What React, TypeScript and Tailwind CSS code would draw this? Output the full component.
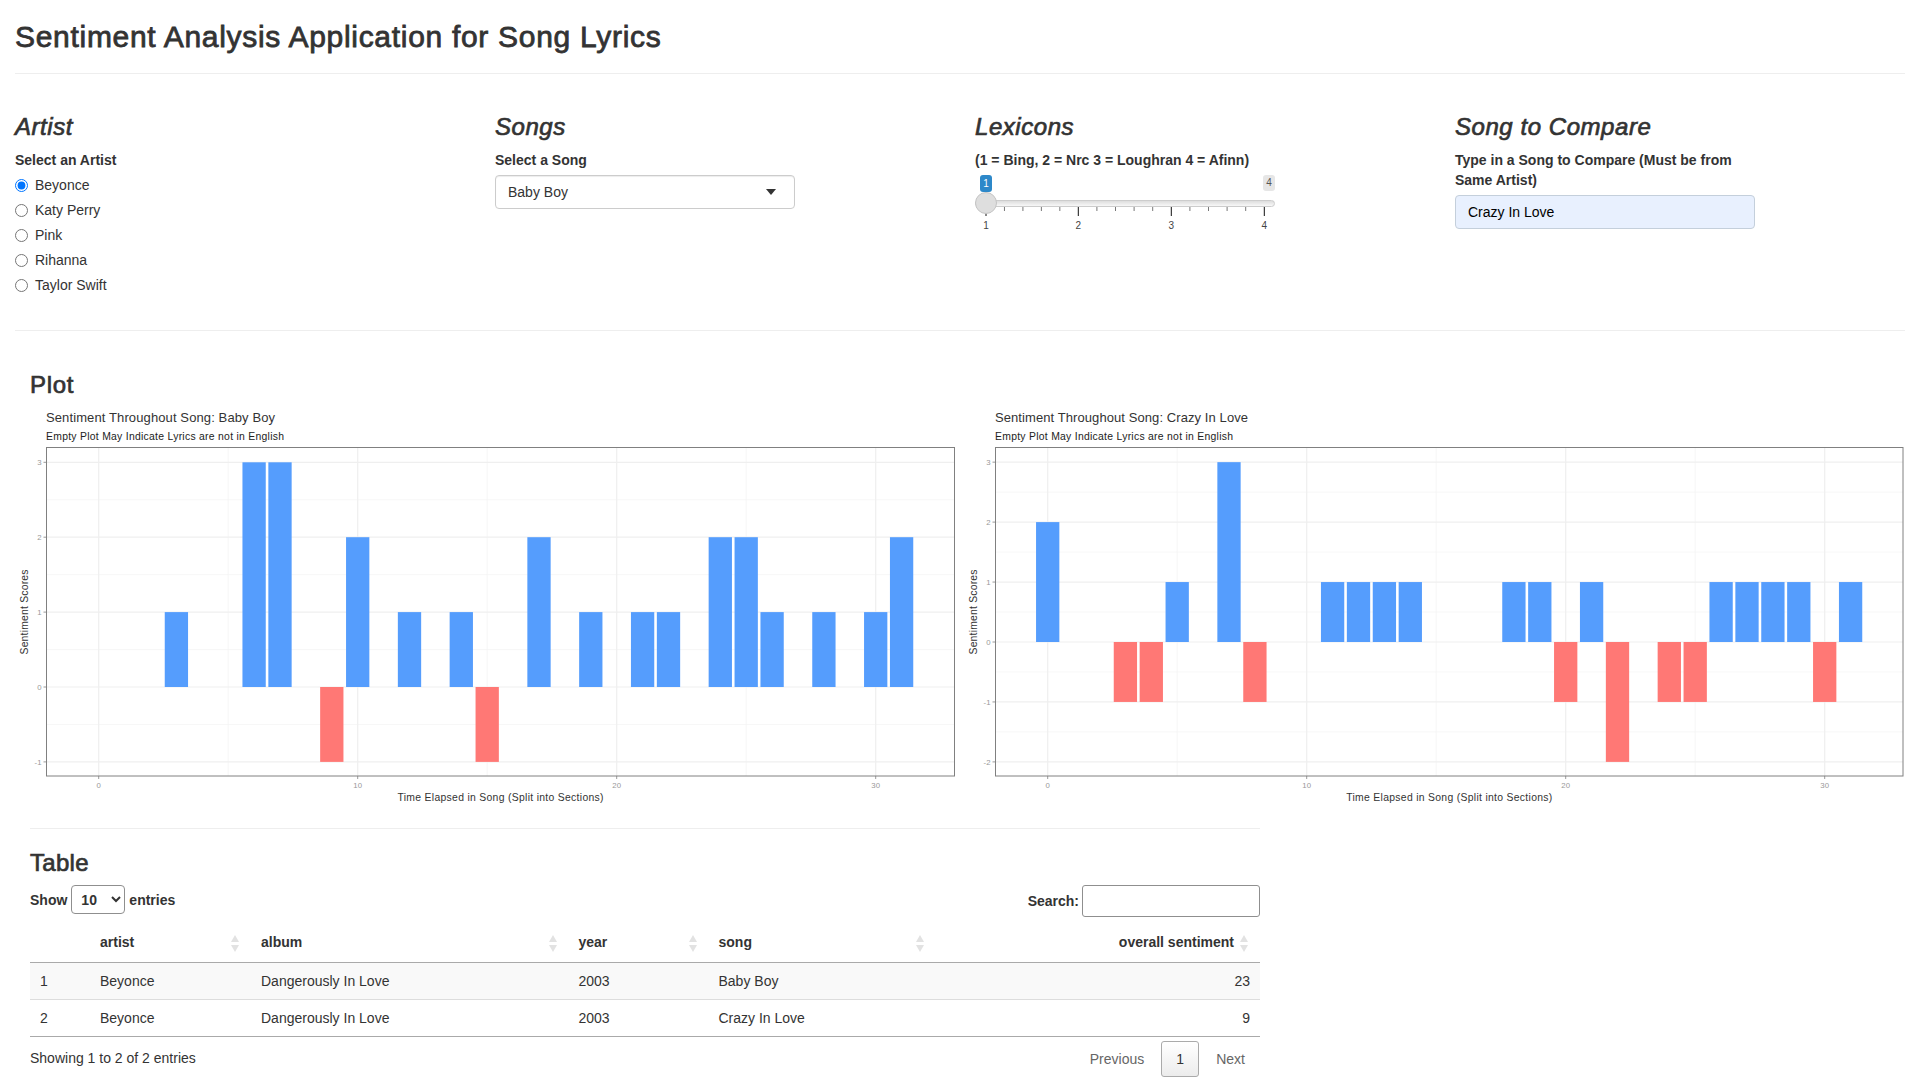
import React from "react";

type Bar = [number, number];

const FONT = "font-['Liberation_Sans',Arial,sans-serif]";

function Plot({
  width,
  panelLeft,
  panelRight,
  x0,
  y0,
  unit,
  yTicks,
  bars,
  title,
  titleLen,
}: {
  width: number;
  panelLeft: number;
  panelRight: number;
  x0: number;
  y0: number;
  unit: number;
  yTicks: number[];
  bars: Bar[];
  title: string;
  titleLen: number;
}) {
  const sx = 25.9;
  const top = 47.5;
  const bottom = 376;
  const px = (v: number) => x0 + v * sx;
  const py = (v: number) => y0 - v * unit;
  const minor: number[] = [];
  for (let i = 0; i < yTicks.length - 1; i++) minor.push((yTicks[i] + yTicks[i + 1]) / 2);
  const mid = (panelLeft + panelRight) / 2;
  const ff = "'Liberation Sans', Arial, sans-serif";
  return (
    <svg width={width} height={428} className="block shrink-0" fontFamily={ff}>
      <text x={panelLeft - 0.5} y={22} fontSize={13} fill="#333" textLength={titleLen}>
        {title}
      </text>
      <text x={panelLeft - 0.5} y={40} fontSize={10.4} fill="#222" textLength={238}>
        Empty Plot May Indicate Lyrics are not in English
      </text>
      {minor.map((v) => (
        <line key={"m" + v} x1={panelLeft} x2={panelRight} y1={py(v)} y2={py(v)} stroke="#f5f5f5" strokeWidth={0.8} />
      ))}
      {[5, 15, 25].map((v) => (
        <line key={"v" + v} x1={px(v)} x2={px(v)} y1={top} y2={bottom} stroke="#f5f5f5" strokeWidth={0.8} />
      ))}
      {yTicks.map((v) => (
        <line key={"M" + v} x1={panelLeft} x2={panelRight} y1={py(v)} y2={py(v)} stroke="#efefef" strokeWidth={1.2} />
      ))}
      {[0, 10, 20, 30].map((v) => (
        <line key={"V" + v} x1={px(v)} x2={px(v)} y1={top} y2={bottom} stroke="#efefef" strokeWidth={1.2} />
      ))}
      {bars.map(([x, v]) => (
        <rect
          key={x}
          x={px(x) - 11.65}
          width={23.3}
          y={v > 0 ? py(v) : y0}
          height={Math.abs(v) * unit}
          fill={v > 0 ? "#559dfd" : "#ff7875"}
        />
      ))}
      <rect x={panelLeft} y={top} width={panelRight - panelLeft} height={bottom - top} fill="none" stroke="#808080" strokeWidth={1} />
      {yTicks.map((v) => (
        <g key={"t" + v}>
          <line x1={panelLeft - 3} x2={panelLeft} y1={py(v)} y2={py(v)} stroke="#808080" strokeWidth={0.8} />
          <text x={panelLeft - 5} y={py(v) + 2.8} fontSize={7.8} fill="#999" textAnchor="end">
            {v}
          </text>
        </g>
      ))}
      {[0, 10, 20, 30].map((v) => (
        <g key={"b" + v}>
          <line x1={px(v)} x2={px(v)} y1={bottom} y2={bottom + 3} stroke="#808080" strokeWidth={0.8} />
          <text x={px(v)} y={388} fontSize={7.8} fill="#999" textAnchor="middle">
            {v}
          </text>
        </g>
      ))}
      <text
        x={0}
        y={0}
        fontSize={10.4}
        fill="#333"
        textAnchor="middle"
        textLength={85}
        transform={`translate(${panelLeft - 18.5} 212) rotate(-90)`}
      >
        Sentiment Scores
      </text>
      <text x={mid} y={400.5} fontSize={10.4} fill="#333" textAnchor="middle" textLength={206}>
        Time Elapsed in Song (Split into Sections)
      </text>
    </svg>
  );
}

const bars1: Bar[] = [
  [3, 1], [6, 3], [7, 3], [9, -1], [10, 2], [12, 1], [14, 1], [15, -1], [17, 2],
  [19, 1], [21, 1], [22, 1], [24, 2], [25, 2], [26, 1], [28, 1], [30, 1], [31, 2],
];
const bars2: Bar[] = [
  [0, 2], [3, -1], [4, -1], [5, 1], [7, 3], [8, -1], [11, 1], [12, 1], [13, 1], [14, 1],
  [18, 1], [19, 1], [20, -1], [21, 1], [22, -2], [24, -1], [25, -1], [26, 1], [27, 1],
  [28, 1], [29, 1], [30, -1], [31, 1],
];

function Col({ title, children }: { title: string; children: React.ReactNode }) {
  return (
    <div className="px-[15px]">
      <h3 className="mt-5 mb-[10px] text-[24px] leading-[26.4px] font-normal italic tracking-[0.55px] [-webkit-text-stroke:0.7px_#333]">
        {title}
      </h3>
      {children}
    </div>
  );
}

function SortIcon() {
  return (
    <svg width="8" height="17" viewBox="0 0 8 17" className="absolute right-3 top-[13px]">
      <path d="M4 0 L8 7 L0 7 Z" fill="#e2e2e2" />
      <path d="M4 17 L8 10 L0 10 Z" fill="#e2e2e2" />
    </svg>
  );
}

function Slider() {
  const majors = [11, 103.3, 196.3, 289.3];
  const minors: number[] = [];
  for (let i = 0; i < 3; i++) {
    for (let j = 1; j < 5; j++) minors.push(majors[i] + ((majors[i + 1] - majors[i]) * j) / 5);
  }
  return (
    <div className="relative h-[62px] w-[300px]">
      <div className="absolute left-[5px] top-0 flex h-[17px] w-3 items-center justify-center rounded-[3px] bg-[#2d88c9] text-[10px] leading-none text-white">
        1
      </div>
      <div className="absolute right-0 top-0 flex h-[16px] w-3 items-center justify-center rounded-[3px] bg-[#e6e6e6] text-[10px] leading-none text-[#555]">
        4
      </div>
      <div className="absolute left-0 top-[25px] h-[7px] w-[300px] rounded-[4px] border border-[#cccccc] bg-gradient-to-b from-[#dddddd] to-[#f8f8f8]" />
      <svg width="300" height="62" className="absolute left-0 top-0" fontFamily="'Liberation Sans', Arial, sans-serif">
        {minors.map((x) => (
          <line key={x} x1={x} x2={x} y1={32} y2={36} stroke="#555" strokeWidth={0.8} />
        ))}
        {majors.map((x, i) => (
          <g key={x}>
            <line x1={x} x2={x} y1={32} y2={41} stroke="#111" strokeWidth={1} />
            <text x={x} y={54} fontSize={10} fill="#444" textAnchor="middle">
              {i + 1}
            </text>
          </g>
        ))}
      </svg>
      <div className="absolute left-0 top-[17px] h-[22px] w-[22px] rounded-full border border-[#c4c4c4] bg-[#dedede]" />
    </div>
  );
}

export default function App() {
  const rows = [
    ["1", "Beyonce", "Dangerously In Love", "2003", "Baby Boy", "23"],
    ["2", "Beyonce", "Dangerously In Love", "2003", "Crazy In Love", "9"],
  ];
  return (
    <div className={`${FONT} h-[1080px] overflow-hidden bg-white px-[15px] pt-5 text-[14px] leading-5 text-[#333]`}>
      <h1 className="mb-5 text-[30px] leading-[33px] font-normal tracking-[0.7px] [-webkit-text-stroke:0.8px_#333]">
        Sentiment Analysis Application for Song Lyrics
      </h1>
      <hr className="border-0 border-t border-[#eee]" />

      <div className="-mx-[15px] mt-[20px] grid h-[236px] grid-cols-4">
        <Col title="Artist">
          <div className="mb-[5px] font-bold">Select an Artist</div>
          <div className="flex flex-col gap-[5px]">
            {["Beyonce", "Katy Perry", "Pink", "Rihanna", "Taylor Swift"].map((a, i) => (
              <label key={a} className="flex h-5 items-center gap-[7px]">
                <input type="radio" name="artist" defaultChecked={i === 0} className="m-0 h-[13px] w-[13px]" />
                <span>{a}</span>
              </label>
            ))}
          </div>
        </Col>
        <Col title="Songs">
          <div className="mb-[5px] font-bold">Select a Song</div>
          <div className="flex h-[34px] w-[300px] items-center justify-between rounded-[4px] border border-[#ccc] pl-3 pr-[18px] shadow-[inset_0_1px_1px_rgba(0,0,0,0.075)]">
            <span>Baby Boy</span>
            <span className="h-0 w-0 border-x-[5px] border-t-[6px] border-x-transparent border-t-[#333]" />
          </div>
        </Col>
        <Col title="Lexicons">
          <div className="mb-[5px] font-bold">(1 = Bing, 2 = Nrc 3 = Loughran 4 = Afinn)</div>
          <Slider />
        </Col>
        <Col title="Song to Compare">
          <div className="mb-[5px] w-[300px] font-bold">Type in a Song to Compare (Must be from Same Artist)</div>
          <input
            type="text"
            defaultValue="Crazy In Love"
            className="block h-[34px] w-[300px] rounded-[4px] border border-[#c4cfdb] bg-[#e8f0fe] px-3 text-[14px] text-black"
          />
        </Col>
      </div>

      <hr className="border-0 border-t border-[#eee]" />

      <h3 className="mt-[41px] h-[28px] pl-[15px] text-[24px] leading-[26.4px] font-normal tracking-[0.7px] [-webkit-text-stroke:0.7px_#333]">
        Plot
      </h3>
      <div className="flex">
        <Plot
          width={948}
          panelLeft={31.5}
          panelRight={939.5}
          x0={83.7}
          y0={287}
          unit={74.9}
          yTicks={[3, 2, 1, 0, -1]}
          bars={bars1}
          title="Sentiment Throughout Song: Baby Boy"
          titleLen={229}
        />
        <Plot
          width={942}
          panelLeft={32.5}
          panelRight={940}
          x0={84.7}
          y0={242}
          unit={59.95}
          yTicks={[3, 2, 1, 0, -1, -2]}
          bars={bars2}
          title="Sentiment Throughout Song: Crazy In Love"
          titleLen={253}
        />
      </div>

      <div className="ml-[15px] w-[1230px]">
        <hr className="border-0 border-t border-[#eee]" />
        <h3 className="mt-[21px] mb-[8.6px] text-[24px] leading-[26.4px] font-normal tracking-[0.3px] [-webkit-text-stroke:0.7px_#333]">
          Table
        </h3>
        <div className="flex h-[32px] items-start justify-between font-bold">
          <div className="flex h-[29px] items-center">
            <span>Show</span>
            <select
              defaultValue="10"
              className="mx-[4px] h-[29px] w-[54px] rounded-[4px] border border-[#8f8f8f] bg-white pl-[5px] text-[14px] font-bold text-[#333]"
            >
              <option value="10">10</option>
              <option value="25">25</option>
            </select>
            <span>entries</span>
          </div>
          <div className="flex items-center gap-[3px]">
            <span>Search:</span>
            <input type="text" className="h-[32px] w-[178px] rounded-[3px] border border-[#8f8f8f] bg-white" />
          </div>
        </div>
        <table className="mt-[5px] w-[1230px] table-fixed border-collapse">
          <colgroup>
            <col className="w-[60px]" />
            <col className="w-[161px]" />
            <col className="w-[317.5px]" />
            <col className="w-[140px]" />
            <col className="w-[227.5px]" />
            <col className="w-[324px]" />
          </colgroup>
          <thead>
            <tr className="h-[40px] border-b border-[#aaa]">
              {["", "artist", "album", "year", "song", "overall sentiment"].map((h, i) => (
                <th
                  key={i}
                  className={`relative p-0 font-bold ${i === 5 ? "pr-[26px] text-right" : "pl-[10px] text-left"}`}
                >
                  {h}
                  {i > 0 && <SortIcon />}
                </th>
              ))}
            </tr>
          </thead>
          <tbody>
            {rows.map((r, ri) => (
              <tr
                key={ri}
                className={`h-[37px] border-b ${ri === 0 ? "border-[#ddd] bg-[#f9f9f9]" : "border-[#aaa] bg-white"}`}
              >
                {r.map((c, i) => (
                  <td key={i} className={`px-[10px] py-0 ${i === 5 ? "text-right" : "text-left"}`}>
                    {c}
                  </td>
                ))}
              </tr>
            ))}
          </tbody>
        </table>
        <div className="flex items-start justify-between">
          <div className="mt-[11px]">Showing 1 to 2 of 2 entries</div>
          <div className="mt-[4px] flex items-center text-[#666]">
            <span className="mr-[17px]">Previous</span>
            <span className="flex h-[36px] w-[38px] items-center justify-center rounded-[3px] border border-[#aaa] bg-gradient-to-b from-white to-[#ececec] text-[#333]">
              1
            </span>
            <span className="ml-[17px] mr-[15px]">Next</span>
          </div>
        </div>
      </div>
    </div>
  );
}
